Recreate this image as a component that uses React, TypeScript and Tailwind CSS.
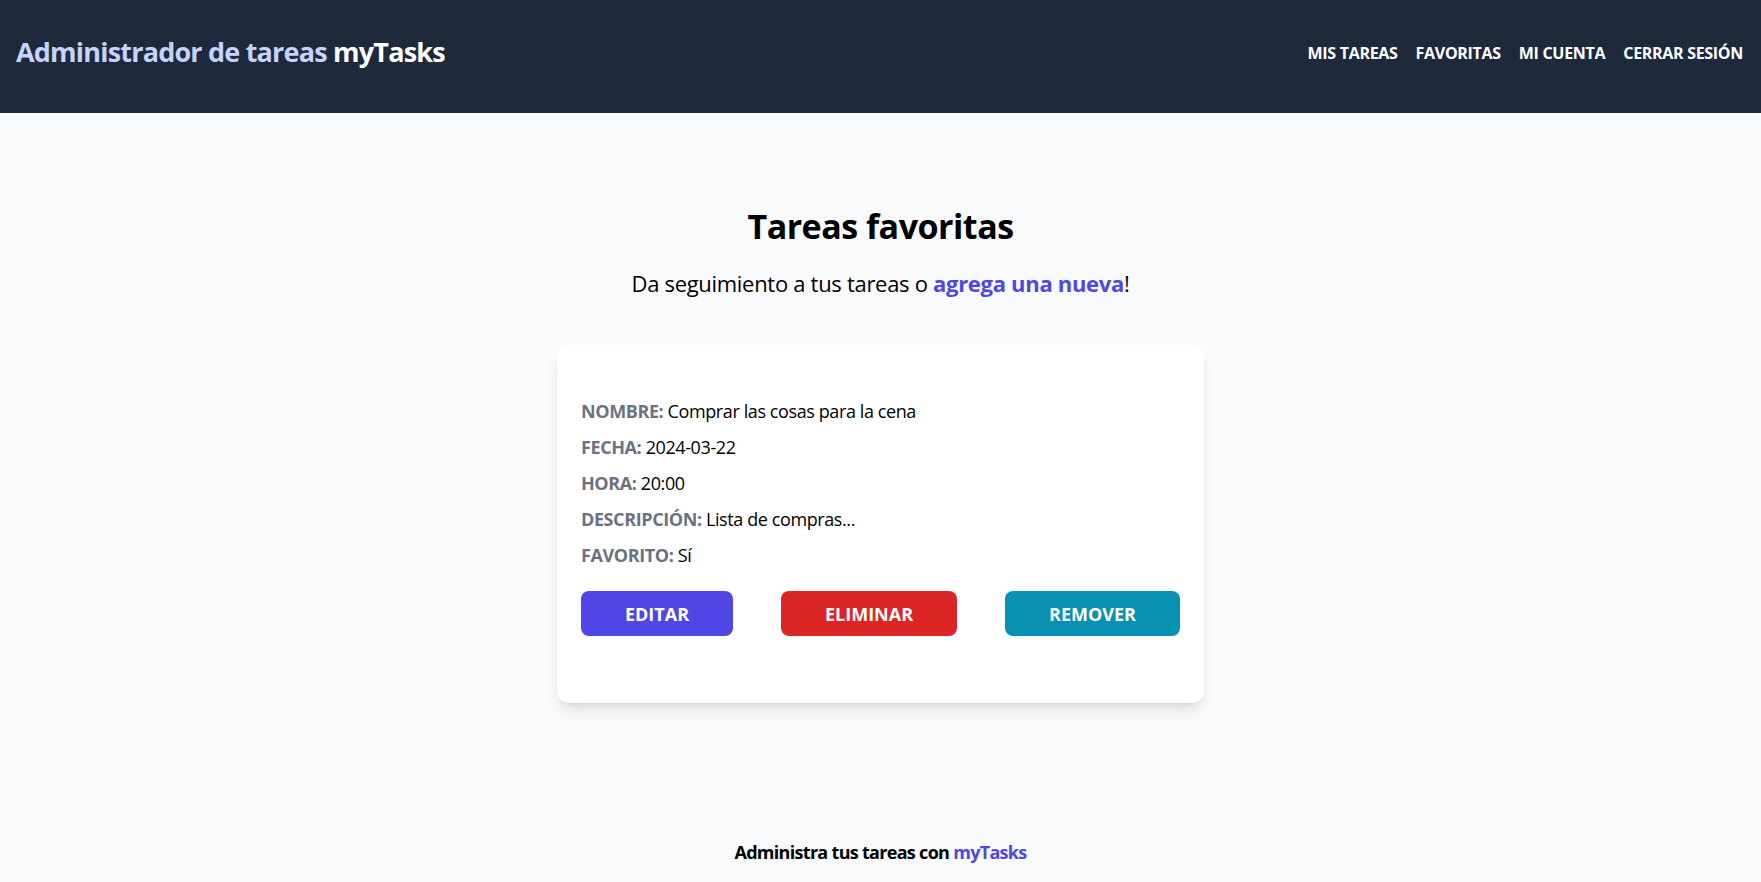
import React from 'react';

const font = { fontFamily: '"Open Sans", "Noto Sans", sans-serif' };

const rows = [
  { label: 'NOMBRE:', value: 'Comprar las cosas para la cena' },
  { label: 'FECHA:', value: '2024-03-22' },
  { label: 'HORA:', value: '20:00' },
  { label: 'DESCRIPCIÓN:', value: 'Lista de compras...' },
  { label: 'FAVORITO:', value: 'Sí' },
];

export default function App() {
  return (
    <div className="min-h-screen flex flex-col bg-[#f8fafc]" style={font}>
      {/* navbar */}
      <header className="h-[113px] bg-[#1e293b] flex items-center justify-between pl-4 pr-[18px] pb-[8px]">
        <h1 className="text-[27px] font-bold text-[#c7d2fe] tracking-[-0.8px]">
          Administrador de tareas <span className="text-white">myTasks</span>
        </h1>
        <nav className="flex gap-[18px] text-[16px] font-bold text-white tracking-[-0.3px]">
          <a href="#">MIS TAREAS</a>
          <a href="#">FAVORITAS</a>
          <a href="#">MI CUENTA</a>
          <a href="#">CERRAR SESIÓN</a>
        </nav>
      </header>

      <main className="flex-1 flex flex-col items-center pt-[93px]">
        <h2 className="text-[34px] leading-10 font-bold text-black tracking-[-0.5px]">Tareas favoritas</h2>
        <p className="mt-[21px] text-[22px] leading-8 text-black tracking-[-0.3px]">
          Da seguimiento a tus tareas o{' '}
          <a href="#" className="font-bold text-[#4f46e5]">agrega una nueva</a>!
        </p>

        <div className="mt-[46px] w-[647px] bg-white rounded-xl shadow-lg px-6 pt-[52px] pb-[67px]">
          <div className="flex flex-col gap-2 text-lg leading-7 tracking-[-0.4px]">
            {rows.map((r) => (
              <p key={r.label}>
                <span className="font-bold text-gray-500">{r.label}</span> {r.value}
              </p>
            ))}
          </div>
          <div className="mt-[22px] flex justify-between text-lg font-bold text-white">
            <button className="w-[152px] h-[45px] rounded-lg bg-[#4f46e5]">EDITAR</button>
            <button className="w-[176px] h-[45px] rounded-lg bg-[#dc2626]">ELIMINAR</button>
            <button className="w-[175px] h-[45px] rounded-lg bg-[#0891b2]">REMOVER</button>
          </div>
        </div>
      </main>

      <footer className="pb-4 text-center text-lg leading-7 font-bold text-black tracking-[-0.7px]">
        Administra tus tareas con <span className="text-[#4f46e5]">myTasks</span>
      </footer>
    </div>
  );
}
